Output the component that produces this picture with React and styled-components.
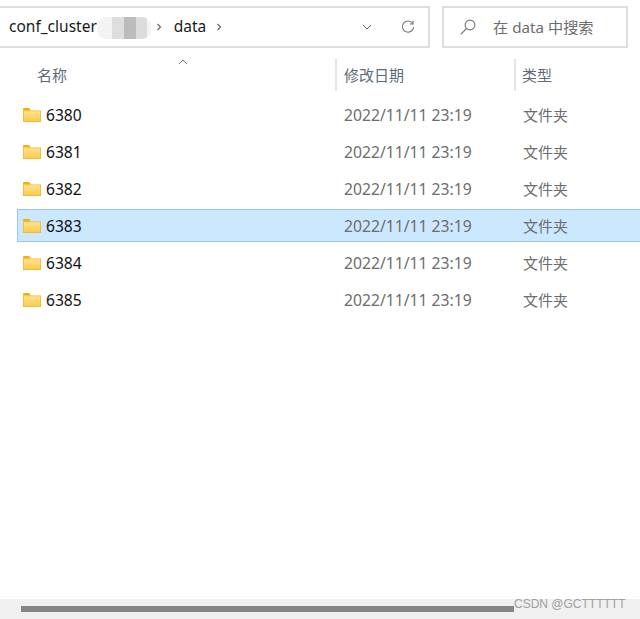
import React from 'react';
import styled, { createGlobalStyle } from 'styled-components';

const Global = createGlobalStyle`
  html, body { margin: 0; padding: 0; background: #fff; }
  body { font-family: "Noto Sans", "Noto Sans CJK SC", sans-serif; }
`;
const Page = styled.div`
  position: relative; width: 640px; height: 619px; overflow: hidden;
  display: flex; flex-direction: column; background: #fff;
`;
const TopBar = styled.div`
  display: flex; gap: 12px; padding: 6px 12px 0 0; height: 42px; flex: none;
`;
const AddressBox = styled.div`
  width: 430px; box-sizing: border-box; height: 42px; display: flex; align-items: center;
  border: 2px solid #dedede; border-left: none; padding: 0 13px 0 9px; color: #1a1a1a; font-size: 15.5px;
`;
const Crumb = styled.span`line-height: 20px; margin-top: -2px;`;
const Mosaic = styled.span`
  display: flex; width: 54px; height: 22px; margin-top: 2px; border-radius: 9px; overflow: hidden; flex: none;
  background: linear-gradient(90deg, #f3f3f3 0 28%, #dedede 28% 50%, #bcbcbc 50% 72%, #dcdcdc 72% 92%, #f4f4f4 92%);
  filter: blur(0.6px);
`;
const Sep = styled.span`display: flex; margin: 0 ${p => p.$r}px 0 ${p => p.$l}px; color: #666;`;
const Spacer = styled.span`flex: 1;`;
const Tool = styled.span`display: flex; margin-left: ${p => p.$l || 0}px;`;
const SearchBox = styled.div`
  width: 186px; box-sizing: border-box; height: 42px; display: flex; align-items: center;
  border: 2px solid #dedede; padding-left: 16px; gap: 17px; font-size: 15.2px; color: #6d6d6d;
`;
const SearchText = styled.span`margin-top: -2px;`;
const Header = styled.div`
  position: relative; display: grid; grid-template-columns: 335px 179px 126px; height: 32px; margin-top: 11px; flex: none;
  font-size: 15px; color: #5f6b7a;
`;
const HeadCell = styled.div`
  display: flex; align-items: center; box-sizing: border-box; height: 32px;
  padding: 0 0 2px ${p => p.$pad}px;
  border-left: ${p => (p.$line ? '2px solid #e5e5e5' : 'none')};
`;
const SortMark = styled.svg`position: absolute; left: 178px; top: 0;`;
const List = styled.div`display: flex; flex-direction: column; gap: 4px; margin-top: 7px; padding-left: 17px;`;
const Row = styled.div`
  display: grid; grid-template-columns: 319px 179px 1fr; height: 33px; box-sizing: border-box; align-items: center;
  border: 1px solid ${p => (p.$sel ? '#99c9ea' : 'transparent')}; border-right: none;
  background: ${p => (p.$sel ? '#cce8ff' : 'transparent')};
`;
const NameCell = styled.div`display: flex; align-items: center; gap: 5px; padding-left: 5px; font-size: 15.6px; color: #111;`;
const DateCell = styled.div`font-size: 15.7px; color: #6d6d6d; padding-left: 8px; margin-left: -1px;`;
const TypeCell = styled.div`font-size: 15px; color: #6d6d6d; padding-left: 7px;`;
const Fill = styled.div`flex: 1;`;
const Track = styled.div`
  height: 20px; flex: none; background: #f0f0f0; display: flex; align-items: center; padding: 0 0 0 21px;
`;
const Thumb = styled.div`width: 493px; height: 6px; background: #858585;`;
const Mark = styled.div`
  position: absolute; left: 514px; top: 596px; font-family: "Liberation Sans", sans-serif; font-size: 12px;
  line-height: 16px; color: #a0a0a0;
`;

const Folder = () => (
  <svg width="18" height="14" viewBox="0 0 18 14">
    <defs>
      <linearGradient id="fg" x1="0" y1="0" x2="0" y2="1">
        <stop offset="0" stopColor="#ffe38a" />
        <stop offset="1" stopColor="#fccb4e" />
      </linearGradient>
    </defs>
    <path d="M0 1A1 1 0 0 1 1 0h5l2 2.5H0z" fill="#f5b000" />
    <path d="M0 2.5h18V14H0z" fill="#efb42a" />
    <path d="M.7 3.2h16.6v10.1H.7z" fill="url(#fg)" />
  </svg>
);
const Chevron = () => (
  <svg width="6" height="10" viewBox="0 0 6 10"><path d="M1.5 2l3 3-3 3" fill="none" stroke="#666" strokeWidth="1.2" /></svg>
);
const rows = ['6380', '6381', '6382', '6383', '6384', '6385'];

export default function App() {
  return (
    <Page>
      <Global />
      <TopBar>
        <AddressBox>
          <Crumb>conf_cluster</Crumb>
          <Mosaic />
          <Sep $l={5} $r={12}><Chevron /></Sep>
          <Crumb>data</Crumb>
          <Sep $l={10} $r={0}><Chevron /></Sep>
          <Spacer />
          <Tool>
            <svg width="10" height="6" viewBox="0 0 10 6"><path d="M1 1l4 4 4-4" fill="none" stroke="#666" strokeWidth="1" /></svg>
          </Tool>
          <Tool $l={29}>
            <svg width="14" height="14" viewBox="0 0 14 14"><path d="M11.6 3.4A5.6 5.6 0 1 0 12.6 7" fill="none" stroke="#777" strokeWidth="1.1" /><path d="M12 .8v3.2H8.8" fill="none" stroke="#777" strokeWidth="1.1" /></svg>
          </Tool>
        </AddressBox>
        <SearchBox>
          <svg width="16" height="16" viewBox="0 0 16 16"><circle cx="10" cy="6" r="4.9" fill="none" stroke="#777" strokeWidth="1.1" /><path d="M6.5 9.5L.8 15.4" stroke="#777" strokeWidth="1.2" /></svg>
          <SearchText>在 data 中搜索</SearchText>
        </SearchBox>
      </TopBar>
      <Header>
        <HeadCell $pad={37}>名称</HeadCell>
        <HeadCell $pad={7} $line>修改日期</HeadCell>
        <HeadCell $pad={6} $line>类型</HeadCell>
        <SortMark width="10" height="6" viewBox="0 0 10 6"><path d="M1 5l4-4 4 4" fill="none" stroke="#777" strokeWidth="1" /></SortMark>
      </Header>
      <List>
        {rows.map(r => (
          <Row key={r} $sel={r === '6383'}>
            <NameCell><Folder />{r}</NameCell>
            <DateCell>2022/11/11 23:19</DateCell>
            <TypeCell>文件夹</TypeCell>
          </Row>
        ))}
      </List>
      <Fill />
      <Track><Thumb /></Track>
      <Mark>CSDN @GCTTTTTT</Mark>
    </Page>
  );
}
